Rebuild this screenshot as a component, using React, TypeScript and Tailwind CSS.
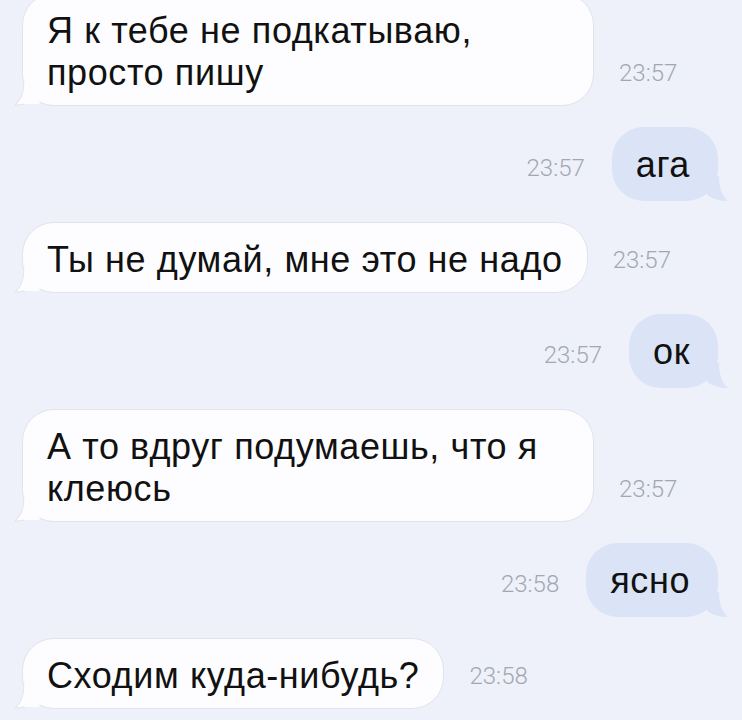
import React from "react"

type Msg = { out: boolean; text: string; time: string }

const messages: Msg[] = [
  { out: false, text: "Я к тебе не подкатываю, просто пишу", time: "23:57" },
  { out: true, text: "ага", time: "23:57" },
  { out: false, text: "Ты не думай, мне это не надо", time: "23:57" },
  { out: true, text: "ок", time: "23:57" },
  { out: false, text: "А то вдруг подумаешь, что я клеюсь", time: "23:57" },
  { out: true, text: "ясно", time: "23:58" },
  { out: false, text: "Сходим куда-нибудь?", time: "23:58" },
]

function Time({ value }: { value: string }) {
  return (
    <span className="mb-[21px] shrink-0 text-[24px] leading-[24px] font-light text-[#a3a7b2] [font-family:Roboto,'Liberation_Sans',sans-serif]">
      {value}
    </span>
  )
}

function InTail() {
  return (
    <svg className="absolute bottom-[-1px] left-[-9px]" width="26" height="26" viewBox="0 0 26 26">
      <path d="M10 0 C10 12 7 20 1 25 C9 25 16 23 22 19 L22 0 Z" fill="#fdfdff" stroke="#e2e4ec" strokeWidth="1" />
      <rect x="10.5" y="0" width="15" height="24" fill="#fdfdff" />
    </svg>
  )
}

function OutTail() {
  return (
    <svg className="absolute bottom-[-1px] right-[-11px]" width="26" height="26" viewBox="0 0 26 26">
      <path d="M16 0 C16 12 19 20 25 25 C17 25 10 23 4 19 L4 0 Z" fill="#dae4f6" />
    </svg>
  )
}

export default function App() {
  return (
    <div className="min-h-[720px] w-[742px] overflow-hidden bg-[#eef0fa] [font-family:'Liberation_Sans',Arial,sans-serif]">
      <div className="mt-[-7px] flex flex-col gap-[21px] pl-[22px] pr-[24px]">
        {messages.map((m, i) =>
          m.out ? (
            <div key={i} className="flex items-end justify-end gap-[27px]">
              <Time value={m.time} />
              <div className="relative rounded-[32px] bg-[#dae4f6] pt-[17px] pb-[15px] pl-[24px] pr-[28px] text-[36px] leading-[42px] tracking-[0.6px] text-[#111]">
                <OutTail />
                <span className="relative">{m.text}</span>
              </div>
            </div>
          ) : (
            <div key={i} className="flex items-end gap-[25px]">
              <div className="relative max-w-[572px] rounded-[32px] border border-[#e2e4ec] bg-[#fdfdff] pt-[16px] pb-[11px] pl-[24px] pr-[24px] text-[36px] leading-[42px] tracking-[0.6px] text-[#111]">
                <InTail />
                <span className="relative">{m.text}</span>
              </div>
              <Time value={m.time} />
            </div>
          )
        )}
      </div>
    </div>
  )
}
